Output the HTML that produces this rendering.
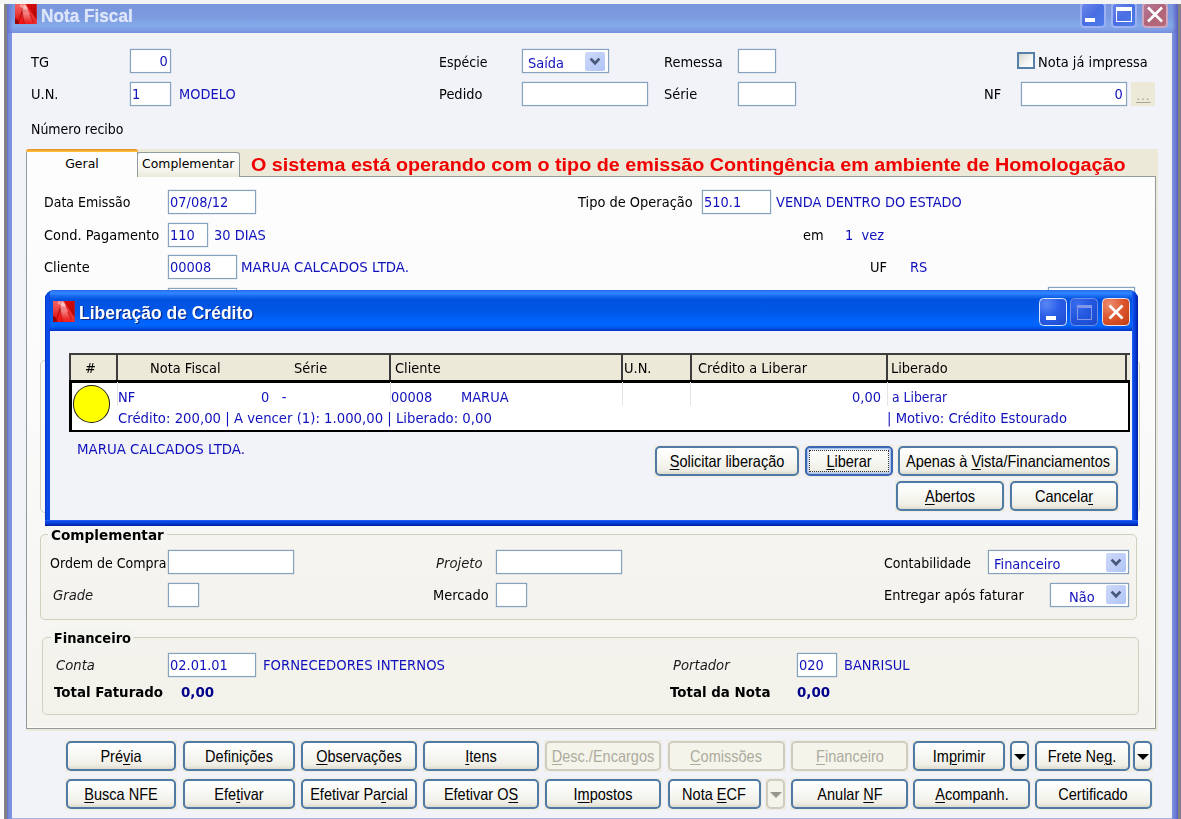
<!DOCTYPE html>
<html lang="pt-BR">
<head>
<meta charset="utf-8">
<title>Nota Fiscal</title>
<style>
html,body{margin:0;padding:0;}
body{width:1181px;height:819px;overflow:hidden;position:relative;background:#fff;font-family:"DejaVu Sans","Liberation Sans",sans-serif;font-size:13px;color:#000;}
div,span{box-sizing:border-box;}
.a{position:absolute;}
.l{position:absolute;white-space:pre;line-height:16px;height:16px;--s:13;font-size:13.75px;transform:scaleX(calc(var(--s)/13.75));transform-origin:0 50%;color:#000;}
.bl{color:#1010bc;}
.bd{font-weight:bold;--s:13.4;}
.nv{color:#00008a;}
.it{font-style:italic;--s:13.2;color:#1a1a1a;}
.f{position:absolute;border:1px solid #86a2be;box-shadow:0 0 1px rgba(127,157,185,.9), inset 0 0 1px rgba(127,157,185,.5);background:#fff;height:24px;line-height:22px;font-size:13px;color:#1010bc;padding:0 2px 0 .8px;white-space:pre;}
.r{text-align:right;}
.btn{position:absolute;height:30px;border:2px solid #4f7aa6;border-radius:5px;background:linear-gradient(#ffffff 0%,#f7f7f2 50%,#efeee6 85%,#dddacc 100%);font-family:"Liberation Sans",sans-serif;font-size:16.5px;line-height:26px;text-align:center;color:#000;white-space:pre;}
.btn>span{position:absolute;left:50%;top:0;transform:translateX(-50%) scaleX(.88);transform-origin:50% 50%;}
.btn u{text-decoration-thickness:1px;text-underline-offset:2px;}
.dis{color:#adab9d;border-color:#cfcdc0;background:#f5f4ea;}
.gb{position:absolute;border:1px solid #d0d0bf;border-radius:5px;}
.cap{position:absolute;white-space:pre;font-weight:bold;--s:13.4;font-size:13.75px;transform:scaleX(calc(var(--s)/13.75));transform-origin:0 50%;line-height:16px;padding:0 3px;}

.cbb{background:linear-gradient(#cfdaf8,#bccbf5 60%,#b4c4f0);border-radius:2px;}
.cbb::after{content:"";position:absolute;left:5.5px;top:5px;width:6.5px;height:6.5px;border-right:2.4px solid #3f4f70;border-bottom:2.4px solid #3f4f70;transform:rotate(45deg) ;transform-origin:50% 50%;}
.dd::after{content:"";position:absolute;left:1.5px;top:10.5px;border:6px solid transparent;border-top:6.5px solid #000;border-bottom:none;}
.dis.dd::after{border-top-color:#9a988c;}

.hs{top:354.6px;width:2px;height:25px;background:#3c3c3c;}
.cs{top:382.2px;width:1px;height:24px;background:#e4e4e4;}
.foc{border-color:#3a66b4;box-shadow:inset 0 0 0 1.5px #a9c3f0;}
.foc::before{content:"";position:absolute;left:2px;top:2px;right:2px;bottom:2px;border:1px dotted #333;}
.cb{line-height:26.2px;}
.bh{position:absolute;height:32px;background:#efede1;}
.ft{display:inline-block;font-size:13.75px;transform:scaleX(.945);transform-origin:0 50%;}
.r .ft{transform-origin:100% 50%;}
</style>
</head>
<body>
<!-- outer desktop strips -->
<div class="a" style="left:0;top:0;width:1181px;height:3.5px;background:#f4f4f4;z-index:50"></div>
<div class="a" style="left:4px;top:3.5px;width:3px;height:816px;background:#828282"></div>
<div class="a" style="left:1178px;top:3.5px;width:3px;height:816px;background:#828282"></div>
<!-- main window frame -->
<div class="a" id="win" style="left:7px;top:3.5px;width:1171px;height:816px;background:linear-gradient(90deg,#6470d0 0,#7b8fde 2px,#7a96df 5px,#7a96df 1165px,#6a78d4 1169px,#5a5cc0 1171px)"></div>
<div class="a" id="tbar" style="left:7px;top:3.5px;width:1171px;height:29px;background:linear-gradient(#7a96de 0%,#7c9ae0 45%,#84aae9 74%,#7f9fe4 88%,#768ddb 100%)"></div>
<div class="a" style="left:7px;top:3.5px;width:6px;height:29px;background:linear-gradient(90deg,#6470d0,rgba(122,150,223,0))"></div>
<div class="a" style="left:1172px;top:3.5px;width:6px;height:29px;background:linear-gradient(90deg,rgba(122,150,223,0),#5a5cc0)"></div>
<div class="a" id="client" style="left:12.3px;top:32.5px;width:1159.7px;height:785.5px;background:#f2f3f9"></div>
<div class="a" style="left:12.3px;top:818px;width:1159.7px;height:1px;background:#a9b2e6"></div>

<!-- title bar content -->
<svg class="a" style="left:15px;top:3.6px" width="21.6" height="20.8" viewBox="0 0 21.4 21.4" preserveAspectRatio="none"><defs>
<linearGradient id="ig" x1="0" y1="0" x2="0" y2="1"><stop offset="0" stop-color="#ee3c3c"/><stop offset=".6" stop-color="#ee2020"/><stop offset="1" stop-color="#f21010"/></linearGradient>
<linearGradient id="ib1" x1="0" y1="0" x2="0" y2="1"><stop offset="0" stop-color="#f26060"/><stop offset=".6" stop-color="#ee4444"/><stop offset="1" stop-color="#e42424"/></linearGradient>
<linearGradient id="ib2" x1="0" y1="0" x2="0" y2="1"><stop offset="0" stop-color="#f9c4c4"/><stop offset=".45" stop-color="#f28080"/><stop offset=".8" stop-color="#ee3232"/><stop offset="1" stop-color="#f21616"/></linearGradient>
<linearGradient id="ib3" x1="0" y1="0" x2=".6" y2="1"><stop offset="0" stop-color="#e00c0c"/><stop offset=".7" stop-color="#c00707"/><stop offset="1" stop-color="#b40505"/></linearGradient>
<linearGradient id="cg" x1="0" y1="0" x2="1" y2="1"><stop offset="0" stop-color="#cdd9fa"/><stop offset="1" stop-color="#b0c4f6"/></linearGradient>
<filter id="bl" x="0" y="0" width="100%" height="100%" color-interpolation-filters="sRGB"><feGaussianBlur stdDeviation=".55"/></filter>
</defs><g filter="url(#bl)"><rect width="21.4" height="21.4" fill="url(#ig)"/>
<path d="M0 0 L7 0 L7.2 6.5 L4.5 14 L0 14 Z" fill="url(#ib1)"/>
<path d="M0 14.8 L2.4 16 L4.4 21.4 L0 21.4 Z" fill="#8e0404" opacity=".92"/>
<path d="M11.5 2.5 L21.4 16 L21.4 21.4 L18.2 21.4 L17.4 17.5 L14.7 10.5 Z" fill="#ec3030"/>
<path d="M8.9 .7 L11.5 3 L14.7 10.5 L17.4 17.5 L17.8 21.4 L9.5 21.4 L8 14 L7.2 7 Z" fill="url(#ib2)"/>
<path d="M10.6 0 L21.4 0 L21.4 16 Z" fill="url(#ib3)"/>
<path d="M7.2 6.5 L5.2 13.5 L2.8 20.5" stroke="#a00808" stroke-width="1.2" fill="none" opacity=".7"/>
<path d="M7.4 8 L8.2 14.5 L9.8 21.2" stroke="#b01010" stroke-width="1.1" fill="none" opacity=".55"/>
<path d="M14.7 11 L18.8 19.2" stroke="#b81212" stroke-width="1" fill="none" opacity=".7"/>
<path d="M5.5 .3 L10.8 .2 L12.8 5 L9 5.2 L4.4 2.6 Z" fill="#fbd2d2" opacity=".55"/>
<path d="M6.5 4.5 L12.8 8.2 M7 6.6 L11 9" stroke="#d84040" stroke-width=".6" opacity=".7"/></g></svg>
<div class="a" style="left:41.3px;top:3.6px;height:24px;line-height:24px;font-family:'Liberation Sans',sans-serif;font-weight:bold;font-size:18.6px;transform:scaleX(.925);transform-origin:0 50%;color:#dde6f9;white-space:pre;text-shadow:0 0 1px #c9d6f5">Nota Fiscal</div>
<div class="a" style="left:1080px;top:2px;width:26px;height:26px;border:2px solid rgba(175,193,246,.8);border-radius:4.5px;background:linear-gradient(135deg,#6a86e8,#4a6ee2 50%,#4d7dea)"></div>
<div class="a" style="left:1085px;top:18px;width:10px;height:4px;background:#fff"></div>
<div class="a" style="left:1111px;top:2px;width:26px;height:26px;border:2px solid rgba(175,193,246,.8);border-radius:4.5px;background:linear-gradient(135deg,#6a86e8,#4a6ee2 50%,#4d7dea)"></div>
<div class="a" style="left:1116px;top:7px;width:15.5px;height:15px;border:1.5px solid #fff;border-top-width:4px"></div>
<div class="a" style="left:1142px;top:2px;width:26px;height:26px;border:2px solid rgba(214,180,206,.8);border-radius:4.5px;background:linear-gradient(135deg,#b47a9a,#ae6478 50%,#b86a78)"></div>
<svg class="a" style="left:1142px;top:2px" width="26" height="26"><path d="M6 5.5 L20 19.5 M20 5.5 L6 19.5" stroke="#fff" stroke-width="2.6"/></svg>

<!-- header fields -->
<div class="l" style="left:31px;top:54px">TG</div>
<div class="f r" style="left:130px;top:49px;width:41px"><span class="ft">0</span></div>
<div class="l" style="left:31px;top:86px">U.N.</div>
<div class="f" style="left:130px;top:81.5px;width:41px"><span class="ft">1</span></div>
<div class="l bl" style="left:179px;top:86px">MODELO</div>
<div class="l" style="left:31px;top:121px;--s:12.55">Número recibo</div>
<div class="l" style="left:439px;top:54px;--s:12.6">Espécie</div>
<div class="f cb" style="left:521.5px;top:49px;width:87px;padding-left:5px"><span class="ft">Saída</span></div>
<svg class="a" style="left:585.3px;top:51.6px" width="20" height="19"><rect width="20" height="19" rx="2" fill="url(#cg)"/><path d="M5.6 6.6 L10 11.2 L14.4 6.6" stroke="#485878" stroke-width="2.7" fill="none"/></svg>
<div class="l" style="left:439px;top:86px">Pedido</div>
<div class="f" style="left:521.5px;top:81.5px;width:126px"></div>
<div class="l" style="left:664px;top:54px">Remessa</div>
<div class="f" style="left:738px;top:49px;width:38px"></div>
<div class="l" style="left:664px;top:86px">Série</div>
<div class="f" style="left:738px;top:81.5px;width:58px"></div>
<div class="a" style="left:1017px;top:51.6px;width:18px;height:17.8px;border:2px solid #5580aa;background:linear-gradient(135deg,#d4d4cf,#f6f6f4 60%,#fff)"></div>
<div class="l" style="left:1038px;top:54px">Nota já impressa</div>
<div class="l" style="left:983.5px;top:86px">NF</div>
<div class="f r" style="left:1020.5px;top:81.5px;width:106.5px;padding-right:3.5px"><span class="ft">0</span></div>
<div class="a" style="left:1131.2px;top:81.5px;width:23.4px;height:24px;background:#ece9d8;color:#a8a690;font-size:12px;line-height:29px;text-align:center;letter-spacing:1px;text-indent:1px;text-decoration:underline;text-underline-offset:2px">...</div>

<!-- tab strip -->
<div class="a" style="left:137px;top:149.3px;width:1021.3px;height:28px;background:#ece9d8"></div>
<div class="a" style="left:26px;top:176.2px;width:1132.3px;height:555.3px;background:#ece9d8"></div>
<div class="a" style="left:250.8px;top:152.1px;transform:scaleX(1.0515);transform-origin:0 50%;height:26px;line-height:26px;font-family:'Liberation Sans',sans-serif;font-weight:bold;font-size:18.8px;color:#f00000;white-space:pre">O sistema está operando com o tipo de emissão Contingência em ambiente de Homologação</div>
<!-- tab page -->
<div class="a" id="page" style="left:26px;top:176.2px;width:1129.7px;height:552.7px;border:1px solid #919b9c;background:linear-gradient(#fdfdfe 0%,#fafafa 45%,#f4f3ee 100%);box-shadow:inset -1px -1px 0 #fbfbf8"></div>
<!-- tabs -->
<div class="a" style="left:137px;top:152.2px;width:102.5px;height:25px;border:1px solid #919b9c;border-bottom:none;border-radius:3px 3px 0 0;background:linear-gradient(#ffffff,#f3f2ea 80%,#ece9d8);text-align:center;line-height:21px;font-size:12.4px">Complementar</div>
<div class="a" style="left:26px;top:148.8px;width:112px;height:28.5px;border:1px solid #919b9c;border-bottom:none;border-top:none;border-radius:4px 4px 0 0;background:#fdfdfe;text-align:center;line-height:29px;font-size:12.5px">Geral</div>
<div class="a" style="left:26px;top:148.8px;width:112px;height:3.5px;border-radius:4px 4px 0 0;background:linear-gradient(#e68b2c,#ffc73c);"></div>

<!-- Geral content -->
<div class="l" style="left:44px;top:194px;--s:12.6">Data Emissão</div>
<div class="f" style="left:168px;top:190px;width:88px"><span class="ft">07/08/12</span></div>
<div class="l" style="left:44px;top:227px">Cond. Pagamento</div>
<div class="f" style="left:168px;top:222.5px;width:40px"><span class="ft">110</span></div>
<div class="l bl" style="left:213.5px;top:227px">30 DIAS</div>
<div class="l" style="left:44px;top:259px">Cliente</div>
<div class="f" style="left:168px;top:255px;width:68.5px"><span class="ft">00008</span></div>
<div class="l bl" style="left:240.5px;top:259px;--s:13.36">MARUA CALCADOS LTDA.</div>
<div class="f" style="left:168px;top:287.5px;width:68.5px"></div>
<div class="f" style="left:1047.5px;top:287px;width:87.5px"></div>
<div class="l" style="left:578px;top:194px">Tipo de Operação</div>
<div class="f" style="left:702px;top:190px;width:68.5px"><span class="ft">510.1</span></div>
<div class="l bl" style="left:776px;top:194px">VENDA DENTRO DO ESTADO</div>
<div class="l" style="left:803px;top:227px">em</div>
<div class="l bl" style="left:844.5px;top:227px">1  vez</div>
<div class="l" style="left:870px;top:259px">UF</div>
<div class="l bl" style="left:909.5px;top:259px">RS</div>

<!-- group box partially hidden (left/right edges peeking under dialog) -->
<div class="gb" style="left:39.5px;top:360px;width:1100.3px;height:152.5px"></div>

<!-- Complementar group -->
<div class="gb" style="left:39.5px;top:534px;width:1097px;height:85.5px;background:rgba(236,233,216,.18)"></div>
<div class="cap" style="left:48px;top:526.8px;background:#f5f5f1;--s:13.63">Complementar</div>
<div class="l" style="left:50px;top:554.5px;--s:12.62">Ordem de Compra</div>
<div class="f" style="left:168px;top:550px;width:126px"></div>
<div class="l it" style="left:53px;top:587px">Grade</div>
<div class="f" style="left:168px;top:582.5px;width:31px"></div>
<div class="l it" style="left:436px;top:554.5px">Projeto</div>
<div class="f" style="left:496px;top:550px;width:126px"></div>
<div class="l" style="left:433px;top:587px">Mercado</div>
<div class="f" style="left:496px;top:582.5px;width:31px"></div>
<div class="l" style="left:884px;top:554.5px;--s:12.6">Contabilidade</div>
<div class="f cb" style="left:988px;top:550px;width:140.5px;padding-left:5px"><span class="ft">Financeiro</span></div>
<svg class="a" style="left:1105.8px;top:552.7px" width="20" height="19"><rect width="20" height="19" rx="2" fill="url(#cg)"/><path d="M5.6 6.6 L10 11.2 L14.4 6.6" stroke="#485878" stroke-width="2.7" fill="none"/></svg>
<div class="l" style="left:884px;top:587px">Entregar após faturar</div>
<div class="f cb" style="left:1050px;top:582.5px;width:78.5px;padding-left:18px"><span class="ft">Não</span></div>
<svg class="a" style="left:1105.8px;top:585.2px" width="20" height="19"><rect width="20" height="19" rx="2" fill="url(#cg)"/><path d="M5.6 6.6 L10 11.2 L14.4 6.6" stroke="#485878" stroke-width="2.7" fill="none"/></svg>

<!-- Financeiro group -->
<div class="gb" style="left:42px;top:637.4px;width:1097px;height:77.4px;background:rgba(236,233,216,.18)"></div>
<div class="cap" style="left:51px;top:630.2px;background:#f4f4ef;--s:13.05">Financeiro</div>
<div class="l it" style="left:56px;top:657px">Conta</div>
<div class="f" style="left:168px;top:653px;width:88px"><span class="ft">02.01.01</span></div>
<div class="l bl" style="left:262.5px;top:657px;--s:13.23">FORNECEDORES INTERNOS</div>
<div class="l bd" style="left:53.5px;top:684px">Total Faturado</div>
<div class="l bd nv" style="left:181px;top:684px">0,00</div>
<div class="l it" style="left:673px;top:657px">Portador</div>
<div class="f" style="left:797px;top:653px;width:40px"><span class="ft">020</span></div>
<div class="l bl" style="left:844px;top:657px">BANRISUL</div>
<div class="l bd" style="left:669.5px;top:684px">Total da Nota</div>
<div class="l bd nv" style="left:796.5px;top:684px">0,00</div>

<!-- bottom buttons -->
<div class="bh" style="left:65px;top:740px;width:112px"></div>
<div class="btn" style="left:66px;top:741px;width:110px"><span>Pré<u>v</u>ia</span></div>
<div class="bh" style="left:182px;top:740px;width:114px"></div>
<div class="btn" style="left:183px;top:741px;width:112px"><span>Definições</span></div>
<div class="bh" style="left:299.5px;top:740px;width:118.5px"></div>
<div class="btn" style="left:300.5px;top:741px;width:116.5px"><span><u>O</u>bservações</span></div>
<div class="bh" style="left:422px;top:740px;width:118px"></div>
<div class="btn" style="left:423px;top:741px;width:116px"><span><u>I</u>tens</span></div>
<div class="bh" style="left:544px;top:740px;width:118px"></div>
<div class="btn dis" style="left:545px;top:741px;width:116px"><span><u>D</u>esc./Encargos</span></div>
<div class="bh" style="left:666.5px;top:740px;width:119px"></div>
<div class="btn dis" style="left:667.5px;top:741px;width:117px"><span><u>C</u>omissões</span></div>
<div class="bh" style="left:790px;top:740px;width:119px"></div>
<div class="btn dis" style="left:791px;top:741px;width:117px"><span><u>F</u>inanceiro</span></div>
<div class="bh" style="left:912px;top:740px;width:94px"></div>
<div class="btn" style="left:913px;top:741px;width:92px"><span>Im<u>p</u>rimir</span></div>
<div class="bh" style="left:1009px;top:740px;width:21px"></div>
<div class="btn dd" style="left:1010px;top:741px;width:19px"></div>
<div class="bh" style="left:1033.5px;top:740px;width:97.5px"></div>
<div class="btn" style="left:1034.5px;top:741px;width:95.5px"><span>Frete Ne<u>g</u>.</span></div>
<div class="bh" style="left:1132px;top:740px;width:21px"></div>
<div class="btn dd" style="left:1133px;top:741px;width:19px"></div>

<div class="bh" style="left:65px;top:778px;width:112px"></div>
<div class="btn" style="left:66px;top:779px;width:110px"><span><u>B</u>usca NFE</span></div>
<div class="bh" style="left:182px;top:778px;width:114px"></div>
<div class="btn" style="left:183px;top:779px;width:112px"><span>Efe<u>t</u>ivar</span></div>
<div class="bh" style="left:299.5px;top:778px;width:118.5px"></div>
<div class="btn" style="left:300.5px;top:779px;width:116.5px"><span>Efetivar Pa<u>r</u>cial</span></div>
<div class="bh" style="left:422px;top:778px;width:118px"></div>
<div class="btn" style="left:423px;top:779px;width:116px"><span>Efetivar O<u>S</u></span></div>
<div class="bh" style="left:544px;top:778px;width:118px"></div>
<div class="btn" style="left:545px;top:779px;width:116px"><span>I<u>m</u>postos</span></div>
<div class="bh" style="left:666.5px;top:778px;width:95.5px"></div>
<div class="btn" style="left:667.5px;top:779px;width:93.5px"><span>Nota <u>E</u>CF</span></div>
<div class="bh" style="left:765px;top:778px;width:21px"></div>
<div class="btn dis dd" style="left:766px;top:779px;width:19px"></div>
<div class="bh" style="left:790px;top:778px;width:119px"></div>
<div class="btn" style="left:791px;top:779px;width:117px"><span>Anular <u>N</u>F</span></div>
<div class="bh" style="left:912px;top:778px;width:119px"></div>
<div class="btn" style="left:913px;top:779px;width:117px"><span><u>A</u>companh.</span></div>
<div class="bh" style="left:1033.5px;top:778px;width:119.5px"></div>
<div class="btn" style="left:1034.5px;top:779px;width:117.5px"><span>Certificado</span></div>

<!-- Liberação de Crédito dialog -->
<div class="a" id="dlg" style="left:44.7px;top:289.7px;width:1093.4px;height:236px;border-radius:9px 9px 0 0;background:#0b45dc;overflow:hidden">
  <div class="a" style="left:0;top:0;width:100%;height:41px;background:linear-gradient(#2468e6 0%,#2b7cf8 4%,#2f84ff 9%,#1a6cf0 14%,#0052e0 23%,#0056e6 50%,#0064fa 75%,#0066ff 86%,#0054e4 93%,#003cd0 97%,#0034c0 100%)"></div>
  <div class="a" style="left:0;top:0;width:5.5px;height:100%;background:linear-gradient(90deg,#0630c0 0,#0a48e6 30%,#0a4ce8 70%,#0844dc 100%)"></div>
  <div class="a" style="right:0;top:0;width:5.6px;height:100%;background:linear-gradient(90deg,#2a62f0 0,#0a4ce8 25%,#0638d0 60%,#00209c 100%)"></div>
  <div class="a" style="left:0;bottom:0;width:100%;height:5.8px;background:linear-gradient(#2a62f0 0,#0a4ce8 25%,#0638d0 60%,#00209c 100%)"></div>
  <div class="a" style="left:5.5px;top:41px;width:1082.2px;height:189px;background:#f2f3f9"></div>
</div>
<svg class="a" style="left:53.1px;top:301.1px" width="21.5" height="21.3" viewBox="0 0 21.4 21.4" preserveAspectRatio="none"><g filter="url(#bl)"><rect width="21.4" height="21.4" fill="url(#ig)"/>
<path d="M0 0 L7 0 L7.2 6.5 L4.5 14 L0 14 Z" fill="url(#ib1)"/>
<path d="M0 14.8 L2.4 16 L4.4 21.4 L0 21.4 Z" fill="#8e0404" opacity=".92"/>
<path d="M11.5 2.5 L21.4 16 L21.4 21.4 L18.2 21.4 L17.4 17.5 L14.7 10.5 Z" fill="#ec3030"/>
<path d="M8.9 .7 L11.5 3 L14.7 10.5 L17.4 17.5 L17.8 21.4 L9.5 21.4 L8 14 L7.2 7 Z" fill="url(#ib2)"/>
<path d="M10.6 0 L21.4 0 L21.4 16 Z" fill="url(#ib3)"/>
<path d="M7.2 6.5 L5.2 13.5 L2.8 20.5" stroke="#a00808" stroke-width="1.2" fill="none" opacity=".7"/>
<path d="M7.4 8 L8.2 14.5 L9.8 21.2" stroke="#b01010" stroke-width="1.1" fill="none" opacity=".55"/>
<path d="M14.7 11 L18.8 19.2" stroke="#b81212" stroke-width="1" fill="none" opacity=".7"/>
<path d="M5.5 .3 L10.8 .2 L12.8 5 L9 5.2 L4.4 2.6 Z" fill="#fbd2d2" opacity=".55"/>
<path d="M6.5 4.5 L12.8 8.2 M7 6.6 L11 9" stroke="#d84040" stroke-width=".6" opacity=".7"/></g></svg>
<div class="a" style="left:79.2px;top:300.4px;height:26px;line-height:26px;font-family:'Liberation Sans',sans-serif;font-weight:bold;font-size:18.8px;transform:scaleX(.931);transform-origin:0 50%;color:#fff;white-space:pre;text-shadow:1.3px 1.3px 0 #0a2a90">Liberação de Crédito</div>
<div class="a" style="left:1039.3px;top:298.2px;width:28px;height:28px;border:1.2px solid #dbe5fb;border-radius:4.5px;background:radial-gradient(circle at 25% 20%,#5a86f4 0,#2a5ee8 45%,#1c48cc 100%)"></div>
<div class="a" style="left:1045.8px;top:315.8px;width:10px;height:4px;background:#fff"></div>
<div class="a" style="left:1070.4px;top:298.2px;width:28px;height:28px;border:1.2px solid #6f8ee6;border-radius:4.5px;background:radial-gradient(circle at 25% 20%,#3a6cec 0,#2358e0 45%,#1c48cc 100%)"></div>
<div class="a" style="left:1077.3px;top:305.3px;width:14.5px;height:14.3px;border:1.3px solid #7f98ea;border-top-width:3.5px"></div>
<div class="a" style="left:1101.8px;top:298.2px;width:28px;height:28px;border:1.2px solid #f0e0e0;border-radius:4.5px;background:radial-gradient(circle at 25% 20%,#ec8c70 0,#dc552c 50%,#c23c14 100%)"></div>
<svg class="a" style="left:1101.8px;top:298.2px" width="28" height="28"><path d="M7.5 7.5 L20.5 20.5 M20.5 7.5 L7.5 20.5" stroke="#fff" stroke-width="2.7"/></svg>

<!-- grid -->
<div class="a" style="left:68.5px;top:352.6px;width:1061.3px;height:28px;background:#ece9d8;border-top:2px solid #3c3c3c;border-left:2px solid #3c3c3c"></div>
<div class="a" style="left:68.5px;top:379.5px;width:1061.3px;height:52.3px;background:#fff;border:2px solid #000;border-left-width:3px;border-top-width:3px"></div>
<div class="a hs" style="left:116px"></div>
<div class="a hs" style="left:388.5px"></div>
<div class="a hs" style="left:621px"></div>
<div class="a hs" style="left:689.5px"></div>
<div class="a hs" style="left:886px"></div>
<div class="a hs" style="left:1124.5px"></div>
<div class="a cs" style="left:117.3px"></div>
<div class="a cs" style="left:389.5px"></div>
<div class="a cs" style="left:621.5px"></div>
<div class="a cs" style="left:690px"></div>
<div class="a cs" style="left:886.5px"></div>
<div class="l" style="left:85px;top:359.5px">#</div>
<div class="l" style="left:150px;top:359.5px">Nota Fiscal</div>
<div class="l" style="left:294px;top:359.5px">Série</div>
<div class="l" style="left:394.5px;top:359.5px">Cliente</div>
<div class="l" style="left:623.5px;top:359.5px">U.N.</div>
<div class="l" style="left:697.5px;top:359.5px">Crédito a Liberar</div>
<div class="l" style="left:890.5px;top:359.5px">Liberado</div>
<div class="a" style="left:72.7px;top:385px;width:37.8px;height:37.6px;border-radius:50%;background:#ffff00;border:1.2px solid #222"></div>
<div class="l bl" style="left:118px;top:388.5px">NF</div>
<div class="l bl" style="left:261px;top:388.5px">0   -</div>
<div class="l bl" style="left:390.5px;top:388.5px">00008</div>
<div class="l bl" style="left:460.5px;top:388.5px">MARUA</div>
<div class="l bl" style="left:852px;top:388.5px">0,00</div>
<div class="l bl" style="left:891.5px;top:388.5px;--s:12.4">a Liberar</div>
<div class="l bl" style="left:118px;top:410px;--s:13.25">Crédito: 200,00 | A vencer (1): 1.000,00 | Liberado: 0,00</div>
<div class="l bl" style="left:887px;top:410px;--s:13.18">| Motivo: Crédito Estourado</div>
<div class="l bl" style="left:76.5px;top:440.5px;--s:13.36">MARUA CALCADOS LTDA.</div>

<div class="bh" style="left:653.5px;top:444.5px;width:146.5px"></div>
<div class="btn" style="left:654.5px;top:445.5px;width:144.5px"><span><u>S</u>olicitar liberação</span></div>
<div class="bh" style="left:804px;top:444.5px;width:89.5px"></div>
<div class="btn foc" style="left:805px;top:445.5px;width:87.5px"><span><u>L</u>iberar</span></div>
<div class="bh" style="left:897px;top:444.5px;width:221.5px"></div>
<div class="btn" style="left:898px;top:445.5px;width:219.5px"><span>Apenas à <u>V</u>ista/Financiamentos</span></div>
<div class="bh" style="left:895px;top:479.5px;width:109.5px"></div>
<div class="btn" style="left:896px;top:480.5px;width:107.5px"><span><u>A</u>bertos</span></div>
<div class="bh" style="left:1009px;top:479.5px;width:109.5px"></div>
<div class="btn" style="left:1010px;top:480.5px;width:107.5px"><span>Cancela<u>r</u></span></div>
</body>
</html>
